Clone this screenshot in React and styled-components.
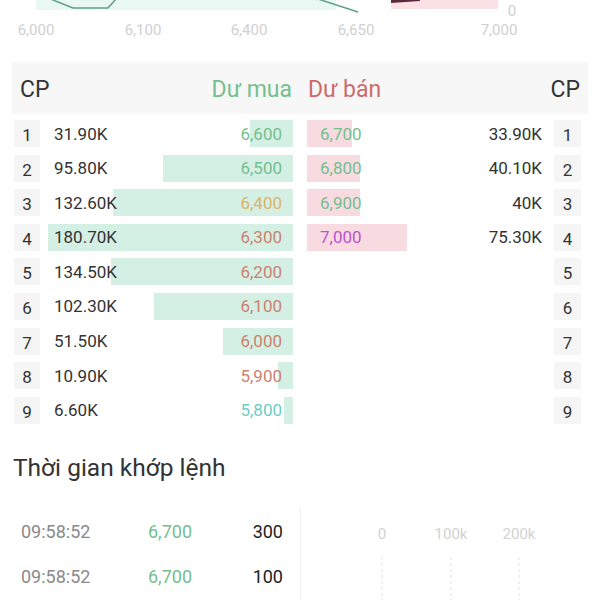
import styled, { createGlobalStyle } from "styled-components";

const GlobalStyle = createGlobalStyle`
  body {
    margin: 0;
    background: #fff;
    font-family: Roboto, "Noto Sans", sans-serif;
    color: #333;
  }
`;

const MAX_VOL = 180.7;

const bids = [
  { vol: "31.90K", v: 31.9, price: "6,600", color: "#74bf8e" },
  { vol: "95.80K", v: 95.8, price: "6,500", color: "#74bf8e" },
  { vol: "132.60K", v: 132.6, price: "6,400", color: "#deb363" },
  { vol: "180.70K", v: 180.7, price: "6,300", color: "#cc8270" },
  { vol: "134.50K", v: 134.5, price: "6,200", color: "#cc8270" },
  { vol: "102.30K", v: 102.3, price: "6,100", color: "#cc8270" },
  { vol: "51.50K", v: 51.5, price: "6,000", color: "#cc8270" },
  { vol: "10.90K", v: 10.9, price: "5,900", color: "#cc8270" },
  { vol: "6.60K", v: 6.6, price: "5,800", color: "#6ccdc2" },
];

const asks = [
  { vol: "33.90K", v: 33.9, price: "6,700", color: "#74bf8e" },
  { vol: "40.10K", v: 40.1, price: "6,800", color: "#74bf8e" },
  { vol: "40K", v: 40, price: "6,900", color: "#74bf8e" },
  { vol: "75.30K", v: 75.3, price: "7,000", color: "#bd52cf" },
];

const trades = [
  { time: "09:58:52", price: "6,700", vol: "300" },
  { time: "09:58:52", price: "6,700", vol: "100" },
];

const Page = styled.div`
  width: 600px;
  height: 600px;
  overflow: hidden;
`;

const Body = styled.div`
  padding: 0 12px;
`;

const Header = styled.div`
  margin-top: 18px;
  height: 52px;
  background: #f7f7f7;
  display: grid;
  grid-template-columns: 288px 1fr;
  font-size: 23px;
`;

const HeadHalf = styled.div`
  display: flex;
  align-items: center;
  justify-content: space-between;
  padding: 3px ${(p) => p.$right}px 0 8px;
`;

const HeadLabel = styled.span`
  color: ${(p) => p.$color || "#333"};
`;

const Book = styled.div`
  margin-top: 6px;
  display: flex;
  flex-direction: column;
  gap: 7.6px;
  padding: 0 1px 0 2px;
`;

const Row = styled.div`
  display: grid;
  grid-template-columns: 26px 245px 245px 27px;
  column-gap: 8px;
  height: 27px;
  font-size: 17px;
`;

const Index = styled.div`
  background: #f5f5f5;
  display: flex;
  align-items: center;
  justify-content: center;
  padding-top: 3px;
  color: #333;
`;

const BuyCell = styled.div`
  display: flex;
  align-items: center;
  justify-content: space-between;
  padding: 0 11px 0 6px;
  background: linear-gradient(
    to left,
    #d4efe4 ${(p) => p.$fill}%,
    transparent ${(p) => p.$fill}%
  );
`;

const SellCell = styled.div`
  margin-left: 6px;
  display: flex;
  align-items: center;
  justify-content: space-between;
  padding: 0 4px 0 13px;
  background: linear-gradient(
    to right,
    #f8dbe0 ${(p) => p.$fill}%,
    transparent ${(p) => p.$fill}%
  );
`;

const Price = styled.span`
  color: ${(p) => p.$color};
`;

const Title = styled.h2`
  margin: 29px 0 0 1px;
  font-size: 24.5px;
  font-weight: 400;
  line-height: 30px;
  color: #333;
`;

const TradeSection = styled.div`
  margin-top: 24px;
  display: grid;
  grid-template-columns: 288px 1fr;
  height: 100px;
`;

const TradeList = styled.div`
  padding: 2px 17px 0 9px;
`;

const TradeRow = styled.div`
  display: grid;
  grid-template-columns: 127px 1fr auto;
  align-items: center;
  height: 45px;
  font-size: 18px;
`;

const Time = styled.span`
  color: #8a8a8a;
`;

const Vol = styled.span`
  color: #222;
`;

const VolChart = styled.div`
  border-left: 1px solid #f0f0f0;
`;

function DepthChart() {
  const labels = [
    ["6,000", 36],
    ["6,100", 143],
    ["6,400", 249],
    ["6,650", 356],
    ["7,000", 499],
  ];
  return (
    <svg width="600" height="44" style={{ display: "block" }}>
      <rect x="36" y="0" width="300" height="10" fill="#e9f8f2" />
      <polyline
        points="48,-2 73,8 108,8 116,-1"
        fill="none"
        stroke="#5f9f8a"
        strokeWidth="1.5"
      />
      <polyline
        points="318,-1 358,12"
        fill="none"
        stroke="#5f9f8a"
        strokeWidth="1.5"
      />
      <rect x="391" y="0" width="107" height="9" fill="#fbe1e6" />
      <path d="M391 3 L420 1 L420 0 L391 0 Z" fill="#5a2a3a" />
      <text x="512" y="16" fontSize="15" fill="#d0d0d0" textAnchor="middle" fontFamily="Roboto">
        0
      </text>
      {labels.map(([t, x]) => (
        <text key={t} x={x} y="35" fontSize="15" fill="#d0d0d0" textAnchor="middle" fontFamily="Roboto">
          {t}
        </text>
      ))}
    </svg>
  );
}

function VolumeAxis() {
  const ticks = [
    ["0", 81],
    ["100k", 150],
    ["200k", 218],
  ];
  return (
    <svg width="287" height="100" style={{ display: "block" }}>
      {ticks.map(([t, x]) => (
        <g key={t}>
          <text x={x} y="32" fontSize="15" fill="#d2d2d2" textAnchor="middle" fontFamily="Roboto">
            {t}
          </text>
          <line x1={x} y1="50" x2={x} y2="100" stroke="#e2e2e2" strokeWidth="1" strokeDasharray="3 3" />
        </g>
      ))}
    </svg>
  );
}

export default function App() {
  return (
    <Page>
      <GlobalStyle />
      <DepthChart />
      <Body>
        <Header>
          <HeadHalf $right={8}>
            <HeadLabel>CP</HeadLabel>
            <HeadLabel $color="#74bf8e">Dư mua</HeadLabel>
          </HeadHalf>
          <HeadHalf $right={8}>
            <HeadLabel $color="#cc6b6b">Dư bán</HeadLabel>
            <HeadLabel>CP</HeadLabel>
          </HeadHalf>
        </Header>
        <Book>
          {bids.map((b, i) => {
            const a = asks[i];
            return (
              <Row key={i}>
                <Index>{i + 1}</Index>
                <BuyCell $fill={(b.v / MAX_VOL) * 100}>
                  <span>{b.vol}</span>
                  <Price $color={b.color}>{b.price}</Price>
                </BuyCell>
                <SellCell $fill={a ? (a.v / MAX_VOL) * 100 : 0}>
                  <Price $color={a ? a.color : "#333"}>{a ? a.price : ""}</Price>
                  <span>{a ? a.vol : ""}</span>
                </SellCell>
                <Index>{i + 1}</Index>
              </Row>
            );
          })}
        </Book>
        <Title>Thời gian khớp lệnh</Title>
        <TradeSection>
          <TradeList>
            {trades.map((t, i) => (
              <TradeRow key={i}>
                <Time>{t.time}</Time>
                <Price $color="#74bf8e">{t.price}</Price>
                <Vol>{t.vol}</Vol>
              </TradeRow>
            ))}
          </TradeList>
          <VolChart>
            <VolumeAxis />
          </VolChart>
        </TradeSection>
      </Body>
    </Page>
  );
}
